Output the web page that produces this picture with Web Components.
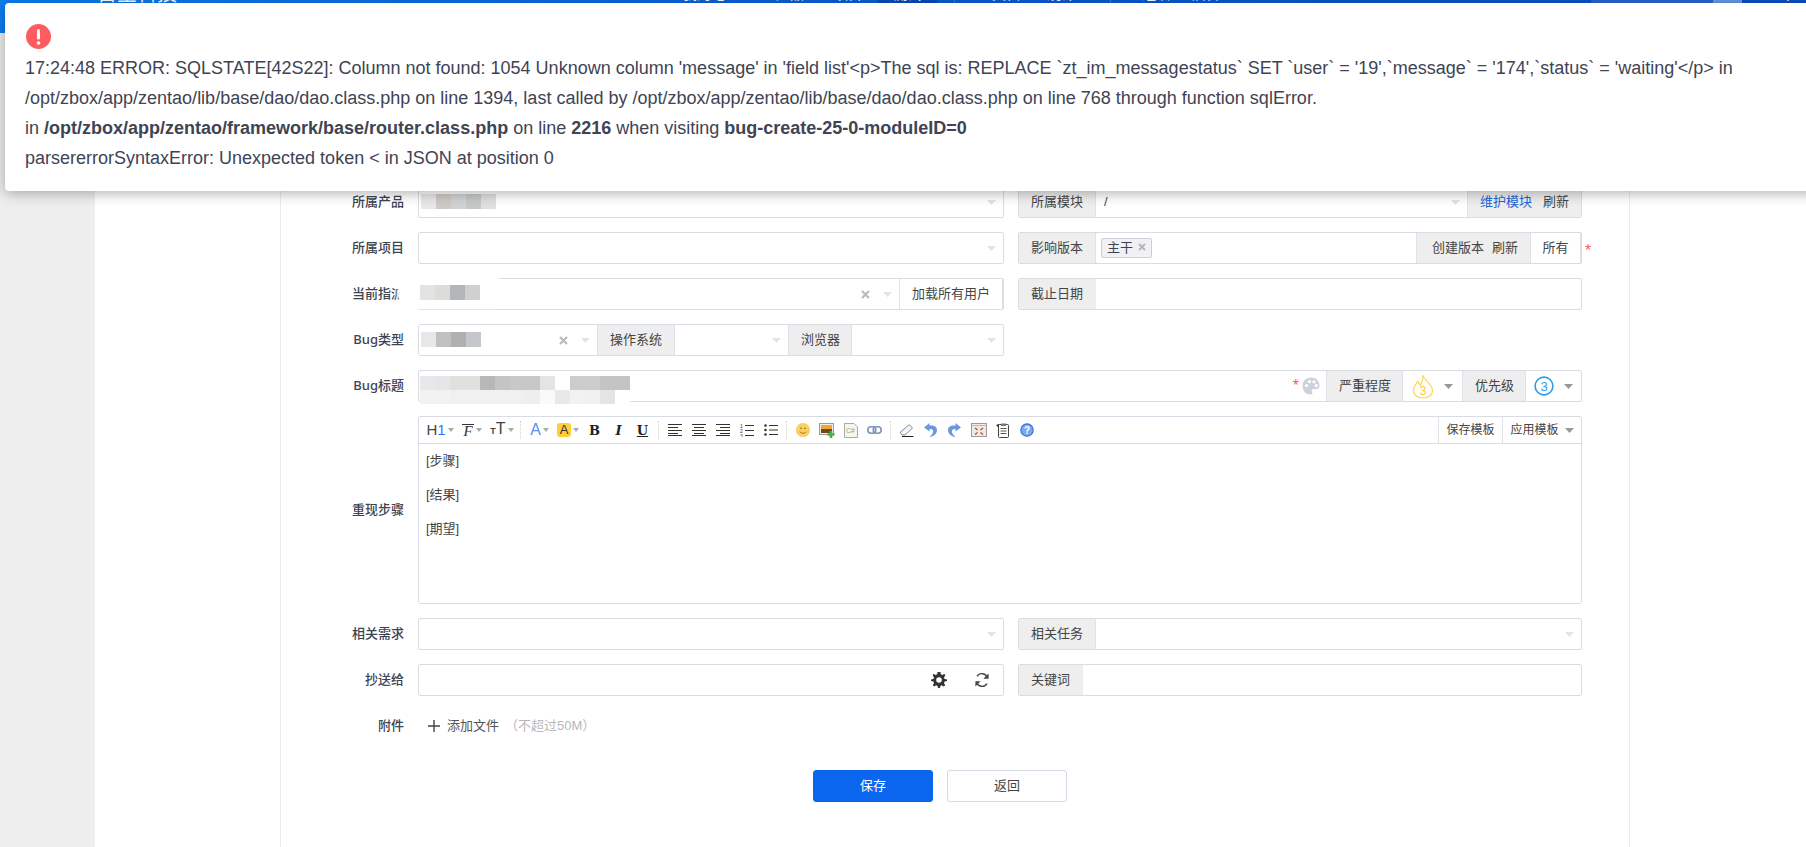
<!DOCTYPE html>
<html lang="zh">
<head>
<meta charset="utf-8">
<title>提Bug</title>
<style>
  html, body { margin: 0; height: 847px; overflow: hidden; background: #eeeeee; }
  body { font: 13px/20px "Liberation Sans", "Noto Sans CJK SC", sans-serif; color: #3c4353; }
  .r { margin-left: 14px; }
  .grow { flex: 1; position: relative; display: flex; align-items: center; justify-content: flex-end; min-width: 0; }
  .blue { color: #2463d8; }
  .star { color: #ff5d5d; font-size: 16px; }
</style>
</head>
<body>
<zt-page>
  <zt-error-modal slot="modal">
    17:24:48 ERROR: SQLSTATE[42S22]: Column not found: 1054 Unknown column 'message' in 'field list'&lt;p&gt;The sql is: REPLACE `zt_im_messagestatus` SET `user` = '19',`message` = '174',`status` = 'waiting'&lt;/p&gt; in<br>
    /opt/zbox/app/zentao/lib/base/dao/dao.class.php on line 1394, last called by /opt/zbox/app/zentao/lib/base/dao/dao.class.php on line 768 through function sqlError.<br>
    in <b>/opt/zbox/app/zentao/framework/base/router.class.php</b> on line <b>2216</b> when visiting <b>bug-create-25-0-moduleID=0</b><br>
    parsererrorSyntaxError: Unexpected token &lt; in JSON at position 0
  </zt-error-modal>

  <zt-row label="所属产品">
    <zt-field><zt-select></zt-select>
      <zt-mosaic style="left:2px;top:7px" cells="e8e8e8 cfcac6 d0d2d4 c6c8c6 dfdfdf"></zt-mosaic></zt-field>
    <zt-field class="r">
      <zt-addon style="width:77px">所属模块</zt-addon>
      <zt-select>/</zt-select>
      <zt-addon style="width:114px;justify-content:flex-end;gap:11px;padding:0 12px 0 0"><span class="blue">维护模块</span><span>刷新</span></zt-addon>
    </zt-field>
  </zt-row>

  <zt-row label="所属项目">
    <zt-field><zt-select></zt-select></zt-field>
    <zt-field class="r">
      <zt-addon style="width:77px">影响版本</zt-addon>
      <zt-select nocaret><zt-tag style="margin-left:-3px">主干</zt-tag></zt-select>
      <zt-addon style="width:115px;justify-content:flex-end;gap:8px;padding:0 12px 0 0"><span>创建版本</span><span>刷新</span></zt-addon>
      <zt-addon plain style="width:50px;justify-content:center;border-left:0;padding:0">所有</zt-addon>
      <span class="star" style="position:absolute;left:100%;margin-left:4px;top:8px">*</span>
    </zt-field>
  </zt-row>

  <zt-row label="当前指派">
    <zt-field><zt-select clear></zt-select>
      <zt-addon plain style="width:104px;justify-content:center;padding:0">加载所有用户</zt-addon>
      <zt-mosaic smudge style="left:1px;top:6px" cells="e3e3e3 dcdcd8 b4b7ba d0d0d0"></zt-mosaic></zt-field>
    <zt-field class="r">
      <zt-addon style="width:77px">截止日期</zt-addon>
    </zt-field>
  </zt-row>

  <zt-row label="Bug类型">
    <zt-field>
      <zt-select clear style="flex:none;width:178px"></zt-select>
      <zt-addon style="width:78px">操作系统</zt-addon>
      <zt-select style="flex:none;width:113px"></zt-select>
      <zt-addon style="width:64px">浏览器</zt-addon>
      <zt-select></zt-select>
      <zt-mosaic style="left:2px;top:7px" cells="e8e6e6 c0c0c0 b0b0b0 c4c8cc"></zt-mosaic>
    </zt-field>
  </zt-row>

  <zt-row label="Bug标题" wide>
    <zt-field>
      <div class="grow" style="padding-right:6px">
        <span class="star" style="margin-right:3px">*</span>
        <svg width="18" height="18" viewBox="0 0 18 18"><path fill="#ccd1dc" d="M9 0.5C4 0.5 0.5 4 0.5 9S4 17.5 8.5 17.5C10.5 17.5 10.8 16 10 15C9 13.6 10 12 11.8 12H14.5C16.5 12 17.5 10.8 17.5 8.8C17.5 4 13.8 0.5 9 0.5Z"/><g fill="#fff"><circle cx="4.5" cy="8.5" r="1.6"/><circle cx="7.5" cy="4.5" r="1.6"/><circle cx="12" cy="4.8" r="1.6"/><circle cx="14.2" cy="8.6" r="1.6"/></g></svg>
      </div>
      <zt-addon style="width:77px">严重程度</zt-addon>
      <zt-pick style="width:59px">
        <svg width="22" height="25" viewBox="0 0 22 25"><path fill="none" stroke="#ffd65c" stroke-width="1.2" d="M11 1C12 6 19 9 20.4 15.5C21 21 16.5 24 11 24C5.5 24 1 21 1.6 15.5C2 11.5 4.5 10 5.6 7.5C7 9 8 10 8.4 11.5C9.6 8.5 11.4 5 11 1Z"/><text x="11" y="21" font-size="12" text-anchor="middle" fill="#ffc93a" font-family="Liberation Sans">3</text></svg>
      </zt-pick>
      <zt-addon style="width:64px">优先级</zt-addon>
      <zt-pick style="width:55px">
        <svg width="20" height="20" viewBox="0 0 20 20"><circle cx="10" cy="10" r="8.9" fill="none" stroke="#2e9bea" stroke-width="1.6"/><text x="10" y="14.6" font-size="13" text-anchor="middle" fill="#2e9bea" font-family="Liberation Sans">3</text></svg>
      </zt-pick>
      <zt-mosaic style="left:1px;top:5px" cells="e8e8e8 e6e6e8 e0e0de e0e0de b8b8b8 c4c4c4 c8c8c8 c8c8c8 e4e4e4 ffffff cccccc cccccc c4c4c4 c4c4c4|f2f2f2 f2f2f2 f0f0f0 f0f0f0 f0f0f0 f0f0f0 f0f0f0 eeeeee fafafa e8eaea f2f2f2 f0f0f0 e4e4e4 ffffff" cellh="14"></zt-mosaic>
    </zt-field>
  </zt-row>

  <zt-row label="重现步骤" wide>
    <zt-editor>
      <zt-toolbar slot="toolbar">
        <zt-tool caret style="width:28px;margin-left:7px"><span style="font-size:15px;color:#444">H<span style="color:#2e7bf0">1</span></span></zt-tool>
        <zt-tool caret style="width:28px;margin-left:4px"><span style="font:italic 15px 'Liberation Serif',serif;color:#333;border-top:1px solid #333;line-height:12px;padding:0 1px">F</span></zt-tool>
        <zt-tool caret style="width:28px;margin-left:2px"><span style="font-size:16px;color:#444"><span style="font-size:9px;font-weight:700">T</span>T</span></zt-tool>
        <zt-tool-sep></zt-tool-sep>
        <zt-tool caret style="width:27px;margin-left:2px"><span style="font-size:16px;color:#5b8ff0">A</span></zt-tool>
        <zt-tool caret style="width:26px;margin-left:2px"><span style="font-size:13px;color:#333;background:#ffcf3a;border-radius:3px;width:14px;height:14px;line-height:14px;text-align:center;display:block">A</span></zt-tool>
        <zt-tool style="margin-left:1.5px"><span style="font:700 13px 'DejaVu Serif',serif;color:#222">B</span></zt-tool>
        <zt-tool><span style="font:italic 700 13px 'DejaVu Serif',serif;color:#222">I</span></zt-tool>
        <zt-tool><span style="font:700 13px 'DejaVu Serif',serif;color:#222;text-decoration:underline">U</span></zt-tool>
        <zt-tool-sep></zt-tool-sep>
        <zt-tool><svg width="14" height="12" viewBox="0 0 14 12" stroke="#333"><path d="M0 .5H14M0 3.5H10M0 6.5H14M0 9.5H10M0 11.5H14"/></svg></zt-tool>
        <zt-tool><svg width="14" height="12" viewBox="0 0 14 12" stroke="#333"><path d="M0 .5H14M2 3.5H12M0 6.5H14M2 9.5H12M0 11.5H14"/></svg></zt-tool>
        <zt-tool><svg width="14" height="12" viewBox="0 0 14 12" stroke="#333"><path d="M0 .5H14M4 3.5H14M0 6.5H14M4 9.5H14M0 11.5H14"/></svg></zt-tool>
        <zt-tool><svg width="14" height="13" viewBox="0 0 14 13"><path stroke="#333" d="M5 1.5H14M5 6.5H14M5 11.5H14"/><g font-size="5" fill="#333" font-family="Liberation Sans"><text x="0" y="4">1</text><text x="0" y="9">2</text><text x="0" y="13.5">3</text></g></svg></zt-tool>
        <zt-tool><svg width="14" height="12" viewBox="0 0 14 12"><path stroke="#333" d="M5 1.5H14M5 6H14M5 10.5H14"/><g fill="#333"><circle cx="1.5" cy="1.5" r="1.3"/><circle cx="1.5" cy="6" r="1.3"/><circle cx="1.5" cy="10.5" r="1.3"/></g></svg></zt-tool>
        <zt-tool-sep></zt-tool-sep>
        <zt-tool><svg width="14" height="14" viewBox="0 0 14 14"><circle cx="7" cy="7" r="6.8" fill="#fbd25f" stroke="#e8b83e" stroke-width=".4"/><circle cx="5" cy="5.2" r=".8" fill="#7a5a10"/><circle cx="9" cy="5.2" r=".8" fill="#7a5a10"/><path d="M3.8 8.6C5 10.8 9 10.8 10.2 8.6" fill="none" stroke="#a8761a"/></svg></zt-tool>
        <zt-tool><svg width="16" height="15" viewBox="0 0 16 15"><rect x=".5" y=".5" width="14" height="11" fill="#eee" stroke="#9a9a9a"/><rect x="2" y="2" width="11" height="4" fill="#f2a52a"/><rect x="2" y="6" width="11" height="4" fill="#6b4a20"/><path d="M12 8V15M8.5 11.5H15.5" stroke="#3fb24a" stroke-width="2.6"/></svg></zt-tool>
        <zt-tool><svg width="14" height="15" viewBox="0 0 14 15"><path d="M.5.5H10L13.5 4V14.5H.5Z" fill="#f6f6f2" stroke="#aaa"/><text x="2" y="10" font-size="7" fill="#c09a50" font-family="Liberation Sans">C#</text></svg></zt-tool>
        <zt-tool><svg width="15" height="8" viewBox="0 0 15 8" fill="none" stroke="#7d94b8" stroke-width="1.6"><rect x=".8" y=".8" width="8" height="6.4" rx="3.2"/><rect x="6.2" y=".8" width="8" height="6.4" rx="3.2"/></svg></zt-tool>
        <zt-tool-sep></zt-tool-sep>
        <zt-tool><svg width="15" height="13" viewBox="0 0 15 13"><path d="M1 8.5L9.5 1.2C10 .8 10.6.8 11 1.2L13 3.2C13.4 3.6 13.4 4.2 13 4.6L6 11H3Z" fill="#f4f6f8" stroke="#7d8da0"/><path d="M3 12.5H14.5" stroke="#222"/></svg></zt-tool>
        <zt-tool><svg width="13" height="14" viewBox="0 0 13 14"><path d="M5.5 0L0 4.5L5.5 8.5V6C8.5 5.8 9.6 7.2 9 9.2C8.6 11 7 12.4 5.5 14C10 13.4 13 10.6 13 7C13 3.6 10 2 5.5 2.6Z" fill="#6b97dc"/></svg></zt-tool>
        <zt-tool><svg width="13" height="14" viewBox="0 0 13 14"><path d="M7.5 0L13 4.5L7.5 8.5V6C4.5 5.8 3.4 7.2 4 9.2C4.4 11 6 12.4 7.5 14C3 13.4 0 10.6 0 7C0 3.6 3 2 7.5 2.6Z" fill="#6b97dc"/></svg></zt-tool>
        <zt-tool><svg width="16" height="14" viewBox="0 0 16 14"><rect x=".5" y=".5" width="15" height="13" fill="#eeeae6" stroke="#9b9b9b"/><path d="M.5 2.5H15.5" stroke="#bbb"/><path d="M4 5L6.5 7M12 5L9.5 7M4 11.5L6.5 9.5M12 11.5L9.5 9.5" stroke="#d24a3c" stroke-width="1.5"/></svg></zt-tool>
        <zt-tool><svg width="14" height="15" viewBox="0 0 14 15"><rect x="2.5" y="1.5" width="10" height="13" rx="1" fill="#fff" stroke="#444"/><rect x="5" y=".5" width="5" height="2.5" fill="#777"/><path d="M4.5 5.5H10.5M4.5 8H10.5M4.5 10.5H10.5" stroke="#555"/><path d="M0 2L3 5V1Z" fill="#333"/></svg></zt-tool>
        <zt-tool><svg width="14" height="14" viewBox="0 0 14 14"><circle cx="7" cy="7" r="6.2" fill="#7ba7ee" stroke="#3f73cf" stroke-width="1.2"/><text x="7" y="10.6" font-size="10" font-weight="700" text-anchor="middle" fill="#fff" font-family="Liberation Sans">?</text></svg></zt-tool>
      </zt-toolbar>
      <p>[步骤]</p>
      <p>[结果]</p>
      <p>[期望]</p>
    </zt-editor>
  </zt-row>

  <zt-row label="相关需求">
    <zt-field><zt-select></zt-select></zt-field>
    <zt-field class="r">
      <zt-addon style="width:77px">相关任务</zt-addon>
      <zt-select></zt-select>
    </zt-field>
  </zt-row>

  <zt-row label="抄送给">
    <zt-field>
      <div class="grow"></div>
      <zt-pick edge style="width:43px">
        <svg width="16" height="16" viewBox="0 0 16 16"><path fill="#333" d="M6.6 0H9.4L9.8 2.2L11.6 3L13.4 1.7L14.3 3.6L12.9 5.4L13.6 7L16 7.4V9L13.6 9.6L13 11.3L14.3 13.2L12.6 14.6L10.8 13.3L9.4 14L9 16H7L6.6 14L5 13.3L3.4 14.6L1.7 13.2L3 11.3L2.4 9.6L0 9V7.4L2.4 7L3.1 5.4L1.7 3.6L2.6 1.7L4.4 3L6.2 2.2Z"/><circle cx="8" cy="8" r="2.8" fill="#fff"/></svg>
      </zt-pick>
      <zt-pick edge style="width:43px">
        <svg width="16" height="16" viewBox="0 0 16 16" fill="none" stroke="#444" stroke-width="1.4"><path d="M13.4 6A5.7 5.7 0 0 0 3 4.4"/><path d="M2.6 10A5.7 5.7 0 0 0 13 11.6"/><path fill="#444" stroke="none" d="M14.6 1.4V6.8H9.4ZM1.4 14.6V9.2H6.6Z"/></svg>
      </zt-pick>
    </zt-field>
    <zt-field class="r">
      <zt-addon style="width:64px">关键词</zt-addon>
    </zt-field>
  </zt-row>

  <zt-row label="附件" wide>
    <zt-upload>添加文件<span slot="hint">（不超过50M）</span></zt-upload>
  </zt-row>

  <zt-actions>
    <zt-button primary>保存</zt-button>
    <zt-button>返回</zt-button>
  </zt-actions>
</zt-page>

<script>
// plain helper for the elements that only need markup
function simple(tag, html) {
  const tpl = document.createElement('template');
  tpl.innerHTML = html;
  customElements.define(tag, class extends HTMLElement {
    constructor() {
      super();
      this.attachShadow({ mode: 'open' });
      this.shadowRoot.appendChild(tpl.content.cloneNode(true));
    }
  });
}

const caret = (color) => `<svg width="9" height="5" viewBox="0 0 9 5" style="display:block;flex:none"><path d="M0 0H9L4.5 5Z" fill="${color}"/></svg>`;

simple('zt-header', `
<style>
  :host { display: block; height: 33px; overflow: hidden; background: linear-gradient(90deg,#0c80f3,#0a5edb 50%,#0a50cb); color: #fff; }
  .bar { display: flex; align-items: flex-end; margin-top: -24px; height: 28px; font-size: 14px; line-height: 20px; }
  .logo { font-size: 20px; line-height: 20px; margin-left: 97px; width: 586px; }
  .bar span { flex: none; }
  .on { background: #0a4cc0; padding: 0 15px; margin-left: 16px; width: 29px; text-align: center; }
  .sep { width: 1px; height: 28px; background: #3f7fe0; }
  .box { height: 28px; background: #2a66d4; width: 122px; margin-left: 371px; }
  .hi { height: 28px; background: #6a9ae8; width: 29px; }
</style>
<div class="bar">
  <span class="logo">日宝科技</span>
  <span>我的地盘</span>
  <span style="margin-left:37px">产品</span>
  <span style="margin-left:30px">项目</span>
  <span class="on">测试</span>
  <span class="sep" style="margin-left:17px"></span>
  <span style="margin-left:37px">文档</span>
  <span style="margin-left:27px">统计</span>
  <span class="sep" style="margin-left:35px"></span>
  <span style="margin-left:31px">组织</span>
  <span style="margin-left:22px">后台</span>
  <span class="box"></span>
  <span class="hi"></span>
  <span style="margin-left:20px">退出</span>
</div>`);

simple('zt-page', `
<style>
  :host { display: block; height: 847px; position: relative; overflow: hidden; }
  main { margin-left: 95px; height: 814px; background: #fff; }
  .inner { margin-left: 185px; width: 1350px; height: 814px; box-sizing: border-box; padding-top: 153px; border-left: 1px solid #ececec; border-right: 1px solid #ececec; display: flex; flex-direction: column; gap: 14px; }
</style>
<zt-header></zt-header>
<main><div class="inner"><slot></slot></div></main>
<slot name="modal"></slot>`);

simple('zt-error-modal', `
<style>
  :host { display: block; position: absolute; left: 5px; top: 3px; width: 1860px; height: 188px; box-sizing: border-box; padding: 21px 20px 0; background: #fff; border-radius: 4px; box-shadow: 0 2px 14px rgba(0,0,0,.32); font-size: 18px; line-height: 30px; color: #3e4454; white-space: nowrap; z-index: 10; }
  svg { display: block; margin: 0 0 4px 1px; }
</style>
<svg width="25" height="25" viewBox="0 0 25 25"><circle cx="12.5" cy="12.5" r="12.5" fill="#ff5c5f"/><rect x="11" y="5" width="3" height="10.5" rx="1.5" fill="#fff"/><circle cx="12.5" cy="19" r="1.8" fill="#fff"/></svg>
<slot></slot>`);

class ZtRow extends HTMLElement {
  constructor() {
    super();
    this.attachShadow({ mode: 'open' }).innerHTML = `
<style>
  :host { display: grid; grid-template-columns: 137px 586px 578px; flex: none; position: relative; }
  .label { align-self: center; margin-top: -2px; text-align: right; padding-right: 14px; font-family: "Noto Sans", "Noto Sans CJK SC", sans-serif; font-weight: 500; color: #3c4353; }
  :host([wide]) ::slotted(*) { grid-column: 2 / 4; width: 1164px; }
</style>
<div class="label"></div><slot></slot>`;
    this.shadowRoot.querySelector('.label').textContent = this.getAttribute('label');
  }
}
customElements.define('zt-row', ZtRow);

simple('zt-field', `
<style>
  :host { display: flex; position: relative; height: 32px; box-sizing: border-box; border: 1px solid #d9dce4; border-radius: 2px; background: #fff; }
</style>
<slot></slot>`);

simple('zt-addon', `
<style>
  :host { display: flex; align-items: center; flex: none; box-sizing: border-box; padding: 0 0 0 12px; background: #eeeeee; border-left: 1px solid #e0e2e8; border-right: 1px solid #e0e2e8; white-space: nowrap; color: #444; }
  :host(:first-child) { border-left: 0; }
  :host(:last-child) { border-right: 0; }
  :host([plain]) { background: #fff; }
</style>
<slot></slot>`);

class ZtSelect extends HTMLElement {
  constructor() {
    super();
    const clear = this.hasAttribute('clear')
      ? `<svg class="x" width="9" height="9" viewBox="0 0 9 9"><path d="M1 1L8 8M8 1L1 8" stroke="#bbbbbb" stroke-width="2.2"/></svg>` : '';
    const arrow = this.hasAttribute('nocaret') ? '' : caret('#e0e3ec');
    this.attachShadow({ mode: 'open' }).innerHTML = `
<style>
  :host { display: flex; align-items: center; flex: 1; min-width: 0; box-sizing: border-box; padding: 0 7px 0 8px; }
  .text { flex: 1; min-width: 0; white-space: nowrap; }
  .x { margin-right: 13px; flex: none; }
</style>
<div class="text"><slot></slot></div>${clear}${arrow}`;
  }
}
customElements.define('zt-select', ZtSelect);

simple('zt-tag', `
<style>
  :host { display: inline-flex; align-items: center; gap: 5px; height: 20px; box-sizing: border-box; padding: 0 5px; background: #f1f1f4; border: 1px solid #ccced8; border-radius: 2px; vertical-align: middle; }
  svg { margin-top: -3px; }
</style>
<slot></slot><svg width="8" height="8" viewBox="0 0 8 8"><path d="M1 1L7 7M7 1L1 7" stroke="#b5b5b5" stroke-width="1.8"/></svg>`);

class ZtPick extends HTMLElement {
  constructor() {
    super();
    const c = this.hasAttribute('edge') ? '' : caret('#999999');
    this.attachShadow({ mode: 'open' }).innerHTML = `
<style>
  :host { display: flex; align-items: center; justify-content: center; gap: 10px; flex: none; box-sizing: border-box; }
</style>
<slot></slot>${c}`;
  }
}
customElements.define('zt-pick', ZtPick);

// the blurred out values: a small block of grey cells on a white smudge
class ZtMosaic extends HTMLElement {
  constructor() {
    super();
    const h = this.getAttribute('cellh') || 15;
    const rows = this.getAttribute('cells').split('|').map(row =>
      `<div class="row">${row.split(' ').map(c => `<i style="background:#${c};height:${h}px"></i>`).join('')}</div>`).join('');
    this.attachShadow({ mode: 'open' }).innerHTML = `
<style>
  :host { display: block; position: absolute; z-index: 1; }
  :host([smudge])::before { content: ""; position: absolute; left: -22px; top: -8px; width: 109px; height: 31px; background: #fff; border-radius: 16px; box-shadow: 0 0 4px #fff; }
  .row { display: flex; position: relative; }
  i { width: 15px; display: block; flex: none; }
</style>
${rows}`;
  }
}
customElements.define('zt-mosaic', ZtMosaic);

simple('zt-editor', `
<style>
  :host { display: block; height: 188px; box-sizing: border-box; border: 1px solid #d9dce4; border-radius: 2px; background: #fff; }
  .body { padding: 7px 7px; }
  ::slotted(p) { margin: 0 0 14px; line-height: 20px; color: #444; }
</style>
<slot name="toolbar"></slot>
<div class="body"><slot></slot></div>`);

simple('zt-toolbar', `
<style>
  :host { display: flex; align-items: center; height: 26px; border-bottom: 1px solid #d9dce4; box-sizing: content-box; }
  .end { margin-left: auto; display: flex; height: 100%; color: #444; font-size: 12px; }
  .end div { display: flex; align-items: center; justify-content: center; gap: 6px; border-left: 1px solid #e0e2e8; box-sizing: border-box; }
</style>
<slot></slot>
<div class="end">
  <div style="width:64px">保存模板</div>
  <div style="width:79px">应用模板${caret('#999999')}</div>
</div>`);

// dropdown tools carry a tiny caret next to the glyph
class ZtTool extends HTMLElement {
  constructor() {
    super();
    const arrow = this.hasAttribute('caret') ? '<i></i>' : '';
    this.attachShadow({ mode: 'open' }).innerHTML = `
<style>
  :host { display: flex; align-items: center; justify-content: center; gap: 2px; width: 24px; height: 26px; flex: none; }
  i { display: block; flex: none; width: 0; height: 0; border: 3.5px solid transparent; border-top: 4px solid #aaa; border-bottom: 0; }
</style>
<slot></slot>${arrow}`;
  }
}
customElements.define('zt-tool', ZtTool);

simple('zt-tool-sep', `
<style>
  :host { display: block; width: 0; height: 18px; border-left: 1px dotted #cfcfcf; margin: 0 3.5px; flex: none; }
</style>`);

simple('zt-upload', `
<style>
  :host { display: flex; align-items: center; height: 32px; padding-left: 10px; color: #555; }
  svg { margin-right: 7px; }
  .hint { color: #b8b8b8; font-size: 13px; margin-left: 6px; }
</style>
<svg width="12" height="12" viewBox="0 0 12 12"><path d="M6 0V12M0 6H12" stroke="#444" stroke-width="1.4"/></svg>
<slot></slot><span class="hint"><slot name="hint"></slot></span>`);

simple('zt-actions', `
<style>
  :host { display: flex; gap: 14px; margin: 14px 0 0 532px; }
</style>
<slot></slot>`);

simple('zt-button', `
<style>
  :host { display: flex; align-items: center; justify-content: center; width: 120px; height: 32px; box-sizing: border-box; border: 1px solid #d5d8e6; border-radius: 3px; background: #fff; color: #444; }
  :host([primary]) { background: #0b66ef; border-color: #0b66ef; color: #fff; }
</style>
<slot></slot>`);
</script>
</body>
</html>
